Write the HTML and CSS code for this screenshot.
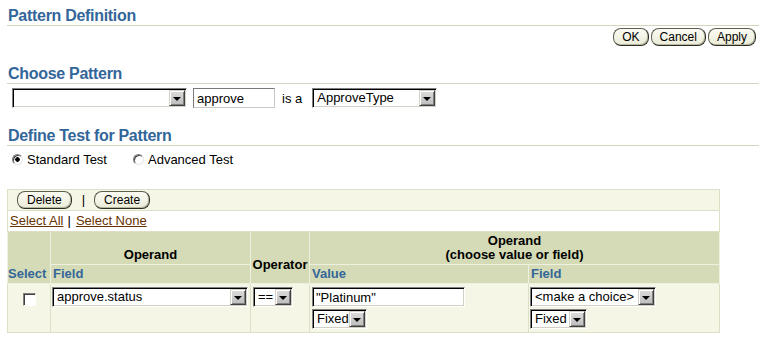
FILE: index.html
```html
<!DOCTYPE html>
<html lang="en">
<head>
    <meta charset="UTF-8" />
    <title>Pattern Definition</title>
    <link rel="stylesheet" href="styles.css">
</head>
<body>
    <div class="page">
        <h1 class="section-title">Pattern Definition</h1>

        <div class="actions">
            <button class="btn">OK</button>
            <button class="btn">Cancel</button>
            <button class="btn">Apply</button>
        </div>

        <h2 class="section-title">Choose Pattern</h2>
        <div class="pattern-row">
            <span class="select w-pattern"><span class="select-text"></span><span class="arrow"></span></span>
            <input type="text" class="textbox w-var" value="approve" />
            <span class="is-a">is a</span>
            <span class="select w-type"><span class="select-text">ApproveType</span><span class="arrow"></span></span>
        </div>

        <h2 class="section-title">Define Test for Pattern</h2>
        <div class="radio-row">
            <label class="radio-label"><input type="radio" name="testType" class="radio" checked /> Standard Test</label>
            <label class="radio-label"><input type="radio" name="testType" class="radio" /> Advanced Test</label>
        </div>

        <table class="test-table">
            <colgroup>
                <col class="c-select">
                <col class="c-field">
                <col class="c-operator">
                <col class="c-value">
                <col class="c-field2">
            </colgroup>
            <tr class="toolbar-row">
                <td colspan="5">
                    <button class="btn">Delete</button><span class="bar">|</span><button class="btn">Create</button>
                </td>
            </tr>
            <tr class="links-row">
                <td colspan="5">
                    <a href="#">Select All</a><span class="link-bar">|</span><a href="#">Select None</a>
                </td>
            </tr>
            <tr class="head-top">
                <th rowspan="2" class="sub-head left">Select</th>
                <th class="group-head">Operand</th>
                <th rowspan="2" class="operator-head">Operator</th>
                <th colspan="2" class="group-head">Operand<br>(choose value or field)</th>
            </tr>
            <tr class="head-bottom">
                <th class="sub-head">Field</th>
                <th class="sub-head">Value</th>
                <th class="sub-head">Field</th>
            </tr>
            <tr class="data-row">
                <td class="check-cell"><input type="checkbox" class="checkbox" /></td>
                <td><span class="select w-field"><span class="select-text">approve.status</span><span class="arrow"></span></span></td>
                <td><span class="select w-op"><span class="select-text">==</span><span class="arrow"></span></span></td>
                <td>
                    <div class="stack">
                        <input type="text" class="textbox w-value" value="&quot;Platinum&quot;" />
                        <span class="select w-fixed"><span class="select-text">Fixed</span><span class="arrow"></span></span>
                    </div>
                </td>
                <td>
                    <div class="stack">
                        <span class="select w-choice"><span class="select-text">&lt;make a choice&gt;</span><span class="arrow"></span></span>
                        <span class="select w-fixed2"><span class="select-text">Fixed</span><span class="arrow"></span></span>
                    </div>
                </td>
            </tr>
        </table>
    </div>
</body>
</html>
```

FILE: styles.css
```css
:root {
    --title-blue: #336699;
    --rule: #d3d6bc;
    --cream: #f6f6e6;
    --header-bg: #d5dbb6;
    --cell-line: #dde0c6;
    --link: #663300;
    --face: #d4d0c8;
}

* {
    box-sizing: border-box;
}

body {
    margin: 0;
    background: #ffffff;
    font-family: "Liberation Sans", Arial, sans-serif;
    font-size: 13px;
    color: #000000;
}

.page {
    padding-left: 7px;
}

/* Section titles */
.section-title {
    margin: 0;
    padding: 6px 0 0 1px;
    font-size: 16px;
    line-height: 19px;
    font-weight: bold;
    letter-spacing: -0.3px;
    color: var(--title-blue);
    border-bottom: 1px solid var(--rule);
}

h2.section-title {
    margin-top: 12px;
}

/* Buttons */
.btn {
    height: 18px;
    padding: 0 8px;
    margin: 0;
    font-family: "Liberation Sans", Arial, sans-serif;
    font-size: 12px;
    line-height: 14px;
    color: #000000;
    background: linear-gradient(#fbfbf3, #ebebd9);
    border: 1px solid #5e5e50;
    border-right-color: #2c2c24;
    border-bottom-color: #2c2c24;
    border-radius: 8px;
    box-shadow: inset -1px -1px 0 #b8b8a0;
    cursor: pointer;
}

.actions {
    display: flex;
    justify-content: flex-end;
    gap: 2px;
    margin-top: 2px;
    padding-right: 3px;
}

/* Fake windows controls */
.select {
    display: inline-flex;
    align-items: stretch;
    height: 20px;
    padding: 1px;
    background: #ffffff;
    border: 1px solid;
    border-color: #808080 #ffffff #ffffff #808080;
    box-shadow: inset 1px 1px 0 #000000, inset -1px -1px 0 var(--face);
}

.select-text {
    flex: 1;
    padding-left: 3px;
    line-height: 16px;
    white-space: nowrap;
    overflow: hidden;
}

.arrow {
    width: 16px;
    height: 16px;
    display: flex;
    align-items: center;
    justify-content: center;
    background: linear-gradient(#dcdcdc, #bdbdbd);
    border: 1px solid;
    border-color: var(--face) #404040 #404040 var(--face);
    box-shadow: inset 1px 1px 0 #ffffff, inset -1px -1px 0 #808080;
}

.arrow::after {
    content: "";
    border-left: 4px solid transparent;
    border-right: 4px solid transparent;
    border-top: 4px solid #000000;
    margin-top: 1px;
}

.textbox {
    height: 20px;
    margin: 0;
    padding: 0 0 0 3px;
    font-family: "Liberation Sans", Arial, sans-serif;
    font-size: 13px;
    color: #000000;
    background: #ffffff;
    border: 1px solid;
    border-color: #808080 #ffffff #ffffff #808080;
    box-shadow: inset 1px 1px 0 #000000, inset -1px -1px 0 var(--face);
    outline: none;
}

.w-var {
    border-color: #7a7a7a #c8c8c8 #c8c8c8 #7a7a7a;
    box-shadow: none;
}

.pattern-row {
    display: flex;
    align-items: center;
    margin-top: 4px;
    padding-left: 5px;
}

.w-pattern { width: 175px; }
.w-var { width: 82px; margin-left: 6px; }
.w-type { width: 125px; }

.is-a {
    margin: 0 10px 0 7px;
}

/* Radios */
.radio-row {
    display: flex;
    align-items: center;
    gap: 26px;
    margin-top: 6px;
    padding-left: 5px;
    height: 14px;
}

.radio-label {
    display: flex;
    align-items: center;
    gap: 4px;
}

.radio {
    appearance: none;
    width: 11px;
    height: 11px;
    margin: 0;
    border-radius: 50%;
    border: 1px solid;
    border-color: #808080 #e8e8e8 #e8e8e8 #808080;
    background: #ffffff;
    box-shadow: inset 1px 1px 0 #404040;
}

.radio:checked {
    background: radial-gradient(circle, #000000 0 2px, #ffffff 2.5px);
}

/* Test table */
.test-table {
    margin-top: 23px;
    width: 713px;
    table-layout: fixed;
    border-collapse: collapse;
    border: 1px solid var(--rule);
}

.c-select { width: 43px; }
.c-field { width: 200px; }
.c-operator { width: 59px; }
.c-value { width: 219px; }
.c-field2 { width: 191px; }

.test-table td,
.test-table th {
    padding: 0;
    border: 1px solid var(--cell-line);
}

.toolbar-row td {
    background: var(--cream);
    padding: 1px 9px;
}

.toolbar-row td .btn {
    padding: 0 9px;
    vertical-align: top;
}

.bar {
    display: inline-block;
    margin: 0 9px 0 10px;
    font-size: 13px;
    line-height: 18px;
    vertical-align: top;
}

.links-row td {
    background: #ffffff;
    padding: 0 2px;
    line-height: 20px;
}

.links-row a {
    color: var(--link);
}

.link-bar {
    margin: 0 5px 0 4px;
}

.test-table th {
    background: var(--header-bg);
    border-color: #eef0e0;
    font-size: 13px;
    font-weight: bold;
    vertical-align: bottom;
}

.test-table .group-head {
    line-height: 14px;
    padding-bottom: 2px;
    text-align: center;
}

.head-top {
    height: 33px;
}

.test-table .operator-head {
    line-height: 16px;
    padding-bottom: 10px;
    text-align: center;
}

.test-table .sub-head {
    color: var(--title-blue);
    text-align: left;
    line-height: 16px;
    padding: 1px 2px;
}

.test-table .sub-head.left {
    padding-left: 0;
}

.data-row td {
    background: var(--cream);
    vertical-align: top;
    padding: 3px 2px;
}

.data-row td.check-cell {
    padding-top: 9px;
    text-align: center;
}

.checkbox {
    appearance: none;
    width: 13px;
    height: 13px;
    margin: 0;
    background: #ffffff;
    border: 1px solid;
    border-color: #808080 #ffffff #ffffff #808080;
    box-shadow: inset 1px 1px 0 #404040;
}

.stack {
    display: flex;
    flex-direction: column;
    align-items: flex-start;
    gap: 2px;
}

.w-field { width: 196px; margin-left: -1px; }
.w-op { width: 40px; }
.w-value { width: 153px; }
.w-fixed { width: 55px; }
.w-choice { width: 126px; margin-left: -1px; }
.w-fixed2 { width: 57px; margin-left: -1px; }
```
